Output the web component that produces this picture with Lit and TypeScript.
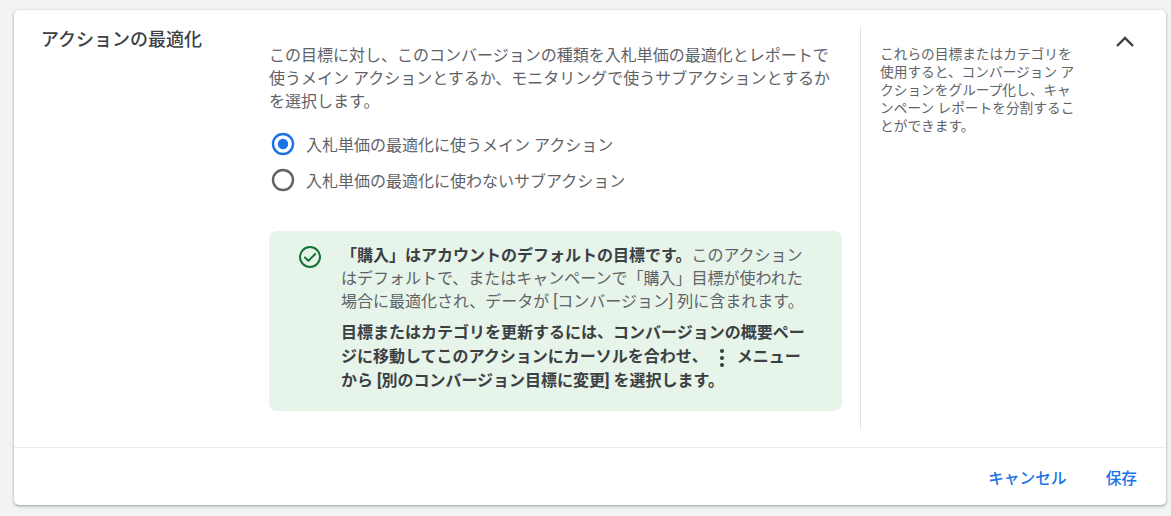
import { LitElement, html, css } from "lit";
import { customElement } from "lit/decorators.js";

@customElement("app-root")
export class AppRoot extends LitElement {
  static styles = css`
    :host {
      display: block;
      width: 1171px;
      height: 516px;
      box-sizing: border-box;
      padding: 10px 5px 11px 14px;
      background: #f1f3f4;
      font-family: Roboto, "Noto Sans CJK JP", sans-serif;
      overflow: hidden;
    }
    .card {
      height: 100%;
      box-sizing: border-box;
      background: #fff;
      border-radius: 5px;
      box-shadow: 0 1px 2px rgba(60, 64, 67, 0.3), 0 1px 3px 1px rgba(60, 64, 67, 0.15);
      display: flex;
      flex-direction: column;
    }
    .main {
      flex: none;
      height: 437px;
      display: flex;
      align-items: flex-start;
    }
    .title {
      flex: none;
      width: 228px;
      box-sizing: border-box;
      padding: 18px 0 0 27px;
      font-size: 18px;
      line-height: 24px;
      font-weight: 500;
      color: #3c4043;
    }
    .center {
      flex: none;
      width: 591px;
      margin-left: 27px;
      padding-top: 34px;
    }
    .desc {
      width: 566px;
      font-size: 16px;
      line-height: 23px;
      color: #5f6368;
    }
    .options {
      margin-top: 19px;
      display: flex;
      flex-direction: column;
      gap: 12px;
    }
    .opt {
      display: flex;
      align-items: center;
      gap: 11px;
      height: 24px;
      margin-left: 2px;
      font-size: 16px;
      color: #5f6368;
    }
    .opt svg { flex: none; display: block; }
    .notice {
      margin-top: 39px;
      width: 573px;
      height: 180px;
      box-sizing: border-box;
      background: #e6f4ea;
      border-radius: 8px;
      padding: 13px 36px 0 29px;
      display: flex;
      gap: 19px;
      font-size: 16px;
      line-height: 23px;
      color: #5f6368;
      text-spacing-trim: space-all;
    }
    .notice > svg { flex: none; margin-top: 1px; display: block; }
    .notice b { font-weight: 700; color: #3c4043; }
    .notice p { margin: 0; }
    .notice p + p { margin-top: 8px; font-weight: 700; color: #3c4043; line-height: 24px; }
    .dots { display: inline-block; vertical-align: -6px; margin: 0 3px 0 6px; }
    .side {
      flex: none;
      width: 217px;
      height: 402px;
      margin-top: 17px;
      box-sizing: border-box;
      border-left: 1px solid #e0e0e0;
      padding: 18px 0 0 19px;
      font-size: 13.7px;
      line-height: 18px;
      color: #5f6368;
    }
    .chev { flex: none; margin: 25px 0 0 38px; display: block; }
    .foot {
      flex: 1;
      border-top: 1px solid #e8eaed;
      display: flex;
      justify-content: flex-end;
      align-items: center;
      gap: 39px;
      padding: 2px 29px 0 0;
      font-size: 15.7px;
      font-weight: 500;
      color: #1a73e8;
    }
  `;

  render() {
    return html`
      <div class="card">
        <div class="main">
          <div class="title">アクションの最適化</div>
          <div class="center">
            <div class="desc">この目標に対し、このコンバージョンの種類を入札単価の最適化とレポートで使うメイン アクションとするか、モニタリングで使うサブアクションとするかを選択します。</div>
            <div class="options">
              <div class="opt">
                <svg width="24" height="24" viewBox="0 0 24 24"><circle cx="12" cy="12" r="10" fill="none" stroke="#1a73e8" stroke-width="2.4"/><circle cx="12" cy="12" r="5.2" fill="#1a73e8"/></svg>
                <span>入札単価の最適化に使うメイン アクション</span>
              </div>
              <div class="opt">
                <svg width="24" height="24" viewBox="0 0 24 24"><circle cx="12" cy="12" r="10" fill="none" stroke="#5f6368" stroke-width="2.4"/></svg>
                <span>入札単価の最適化に使わないサブアクション</span>
              </div>
            </div>
            <div class="notice">
              <svg width="24" height="24" viewBox="0 0 24 24" fill="none" stroke="#137333" stroke-width="2"><circle cx="12" cy="12" r="10"/><path d="M7 12.5l3.4 3.4L17.2 9" stroke-linecap="round" stroke-linejoin="round"/></svg>
              <div>
                <p><b>「購入」はアカウントのデフォルトの目標です。</b>このアクションはデフォルトで、またはキャンペーンで「購入」目標が使われた場合に最適化され、データが [コンバージョン] 列に含まれます。</p>
                <p>目標またはカテゴリを更新するには、コンバージョンの概要ページに移動してこのアクションにカーソルを合わせ、<svg class="dots" width="16" height="20" viewBox="0 0 16 20" fill="#3c4043"><circle cx="8" cy="3" r="2.1"/><circle cx="8" cy="10" r="2.1"/><circle cx="8" cy="17" r="2.1"/></svg> メニューから [別のコンバージョン目標に変更] を選択します。</p>
              </div>
            </div>
          </div>
          <div class="side">これらの目標またはカテゴリを使用すると、コンバージョン アクションをグループ化し、キャンペーン レポートを分割することができます。</div>
          <svg class="chev" width="20" height="12" viewBox="0 0 20 12" fill="none" stroke="#3c4043" stroke-width="2.4"><path d="M2 11l8-8 8 8"/></svg>
        </div>
        <div class="foot"><span>キャンセル</span><span>保存</span></div>
      </div>
    `;
  }
}
